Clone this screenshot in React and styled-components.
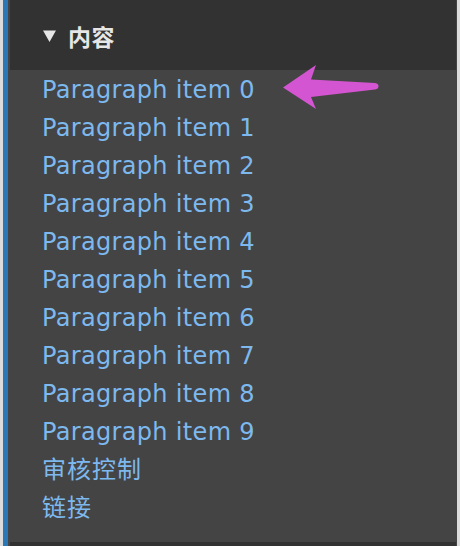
import React from "react";
import styled, { createGlobalStyle } from "styled-components";

const Global = createGlobalStyle`
  html, body { margin: 0; padding: 0; background: #dcdcdc; }
  body { width: 460px; height: 546px; overflow: hidden; }
`;

const Page = styled.div`
  position: relative;
  width: 460px;
  height: 546px;
  display: flex;
  padding-left: 3px;
  box-sizing: border-box;
  background: #dcdcdc;
`;

const Panel = styled.div`
  width: 454px;
  height: 546px;
  background: #444444;
  border-left: 5px solid #2a78b8;
  box-sizing: border-box;
  display: flex;
  flex-direction: column;
  overflow: hidden;
`;

const SectionHeader = styled.div`
  flex: none;
  height: ${(p) => p.$h}px;
  margin: 0 1px 0 2px;
  background: #323232;
  display: flex;
  align-items: center;
  padding-left: 33px;
  box-sizing: border-box;
  gap: 12px;
  color: #e6e6e6;
`;

const Caret = styled.svg`
  flex: none;
  display: block;
  margin-top: 1px;
`;

const Title = styled.span`
  font-family: "Noto Sans CJK SC", sans-serif;
  font-weight: bold;
  font-size: 23px;
  letter-spacing: 0.5px;
  line-height: 1;
  margin-top: 2px;
`;

const List = styled.div`
  flex: none;
  display: flex;
  flex-direction: column;
  padding: 1px 0 0 34px;
  height: 472px;
  box-sizing: border-box;
`;

const Item = styled.a`
  display: block;
  height: 38px;
  line-height: 38px;
  font-family: "DejaVu Sans", "Noto Sans CJK SC", sans-serif;
  font-size: 24px;
  letter-spacing: ${(p) => (p.$cjk ? "1px" : "0.33px")};
  color: #7db9ef;
  text-decoration: none;
  white-space: nowrap;
`;

const Arrow = styled.svg`
  position: absolute;
  left: 278px;
  top: 60px;
  overflow: visible;
`;

const items = [
  ...Array.from({ length: 10 }, (_, i) => ({ t: `Paragraph item ${i}` })),
  { t: "审核控制", cjk: true },
  { t: "链接", cjk: true },
];

export default function App() {
  return (
    <>
      <Global />
      <Page>
        <Panel>
          <SectionHeader $h={70}>
            <Caret width="13" height="12" viewBox="0 0 13 12">
              <polygon points="0,0.5 13,0.5 6.5,12" fill="#e6e6e6" />
            </Caret>
            <Title>内容</Title>
          </SectionHeader>
          <List>
            {items.map((it) => (
              <Item key={it.t} href="#" $cjk={it.cjk}>
                {it.t}
              </Item>
            ))}
          </List>
          <SectionHeader $h={30} />
        </Panel>
        <Arrow width="110" height="60" viewBox="278 60 110 60">
          <path
            d="M283 87.5 L316 65 L311 79.5 L375 83 Q378.5 83.5 378.5 86.3 Q378.5 89 375 89.5 L311 97 L316 109 Z"
            fill="#d455d1"
          />
        </Arrow>
      </Page>
    </>
  );
}
